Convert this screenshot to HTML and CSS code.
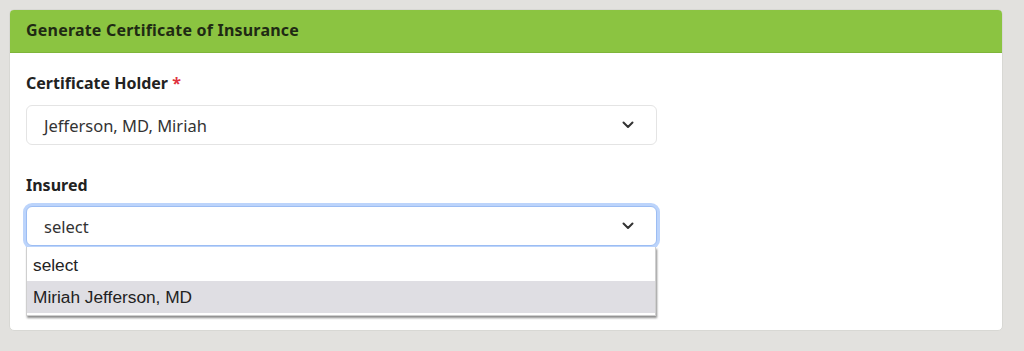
FILE: index.html
```html
<!DOCTYPE html>
<html lang="en">
<head>
  <meta charset="UTF-8">
  <meta name="viewport" content="width=device-width, initial-scale=1.0">
  <title>Generate Certificate of Insurance</title>
  <link rel="stylesheet" href="styles.css">
</head>
<body>
  <div class="card">
    <div class="card-header">Generate Certificate of Insurance</div>

    <div class="card-body">
      <div class="field">
        <label class="field-label">Certificate Holder <span class="required">*</span></label>
        <div class="select-box">
          <span>Jefferson, MD, Miriah</span>
          <svg class="chevron" width="12" height="8" viewBox="0 0 12 8"><path d="M1.5 1.5 L6 6 L10.5 1.5" fill="none" stroke="#333" stroke-width="2" stroke-linecap="round" stroke-linejoin="round"/></svg>
        </div>
      </div>

      <div class="field">
        <label class="field-label">Insured</label>
        <div class="select-wrap">
          <div class="select-box focused">
            <span>select</span>
            <svg class="chevron" width="12" height="8" viewBox="0 0 12 8"><path d="M1.5 1.5 L6 6 L10.5 1.5" fill="none" stroke="#333" stroke-width="2" stroke-linecap="round" stroke-linejoin="round"/></svg>
          </div>
          <!-- opened option list -->
          <ul class="option-list">
            <li>select</li>
            <li class="active">Miriah Jefferson, MD</li>
          </ul>
        </div>
      </div>
    </div>
  </div>
</body>
</html>
```

FILE: styles.css
```css
body {
  margin: 0;
  padding: 9px;
  background-color: #e2e1de;
  font-family: "Noto Sans", "Open Sans", sans-serif;
}

.card {
  width: 994px;
  height: 322px;
  box-sizing: border-box;
  background-color: #fff;
  border-radius: 5px;
  border: 1px solid #d8d8d4;
  overflow: visible;
}

.card-header {
  background-color: #8bc441;
  color: #1f2a14;
  font-weight: bold;
  font-size: 16px;
  letter-spacing: 0.2px;
  height: 42px;
  line-height: 41px;
  padding: 0 16px;
  border-radius: 4px 4px 0 0;
  border-bottom: 1px solid #7fb53a;
}

.card-body {
  padding: 18px 16px 0;
}

.field {
  margin-bottom: 28px;
}

.field-label {
  display: block;
  font-weight: bold;
  font-size: 16px;
  line-height: 24px;
  color: #222;
  margin-bottom: 10px;
}

.field + .field .field-label {
  margin-bottom: 9px;
}

.required {
  color: #e0323e;
}

.select-wrap {
  position: relative;
  width: 631px;
}

.select-box {
  width: 631px;
  height: 40px;
  box-sizing: border-box;
  border: 1px solid #e4e4e4;
  border-radius: 6px;
  padding: 0 22px 0 17px;
  display: flex;
  align-items: center;
  justify-content: space-between;
  font-size: 16.5px;
  color: #333;
  background: #fff;
}

.select-box.focused {
  border-color: #9cbdf3;
  box-shadow: 0 0 0 3px #bcd4fb;
}

.chevron {
  display: block;
}

.option-list {
  position: absolute;
  top: 41px;
  left: 0;
  width: 630px;
  box-sizing: border-box;
  margin: 0;
  padding: 2px 0 2px;
  list-style: none;
  background: #fff;
  border: 1px solid #cfcfcf;
  border-top: none;
  box-shadow: 1px 2px 2px rgba(0, 0, 0, 0.45);
  font-family: "Liberation Sans", Arial, sans-serif;
  font-size: 17.3px;
  color: #222;
}

.option-list li {
  height: 32px;
  line-height: 32px;
  padding: 0 6px;
}

.option-list li.active {
  background-color: #dfdee3;
}
```
